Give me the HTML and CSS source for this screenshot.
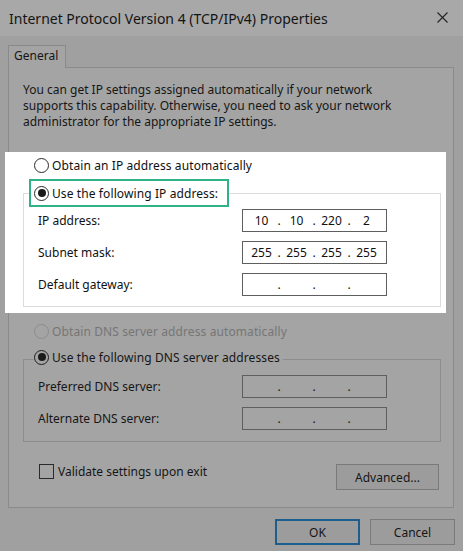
FILE: index.html
```html
<!DOCTYPE html>
<html lang="en">
<head>
<meta charset="utf-8">
<title>Internet Protocol Version 4 (TCP/IPv4) Properties</title>
<link rel="stylesheet" href="styles.css">
</head>
<body>
<div class="window">
  <div class="titlebar">
    <span class="title">Internet Protocol Version 4 (TCP/IPv4) Properties</span>
    <span class="close"><svg width="11" height="11" viewBox="0 0 11 11"><path d="M0.5 0.5 L10.5 10.5 M10.5 0.5 L0.5 10.5" stroke="#222" stroke-width="1.1" fill="none"/></svg></span>
  </div>
  <div class="main">
    <div class="tabs"><div class="tab">General</div></div>
    <div class="panel">
      <p class="desc">You can get IP settings assigned automatically if your network<br>supports this capability. Otherwise, you need to ask your network<br>administrator for the appropriate IP settings.</p>

      <div class="highlight">
        <div class="radio-row first"><span class="radio"></span><span>Obtain an IP address automatically</span></div>
        <div class="radio-row focus"><span class="radio checked"></span><span>Use the following IP address:</span></div>
        <div class="group group-ip">
          <span class="label">IP address:</span>
          <div class="ipbox"><span class="seg">10</span><span class="dot">.</span><span class="seg">10</span><span class="dot">.</span><span class="seg">220</span><span class="dot">.</span><span class="seg">2</span></div>
          <span class="label">Subnet mask:</span>
          <div class="ipbox"><span class="seg">255</span><span class="dot">.</span><span class="seg">255</span><span class="dot">.</span><span class="seg">255</span><span class="dot">.</span><span class="seg">255</span></div>
          <span class="label">Default gateway:</span>
          <div class="ipbox"><span class="seg"></span><span class="dot">.</span><span class="seg"></span><span class="dot">.</span><span class="seg"></span><span class="dot">.</span><span class="seg"></span></div>
        </div>
      </div>

      <div class="radio-row disabled dns-auto"><span class="radio"></span><span>Obtain DNS server address automatically</span></div>
      <div class="radio-row dns-manual"><span class="radio checked gray"></span><span>Use the following DNS server addresses</span></div>
      <div class="group group-dns">
        <span class="label">Preferred DNS server:</span>
        <div class="ipbox"><span class="seg"></span><span class="dot">.</span><span class="seg"></span><span class="dot">.</span><span class="seg"></span><span class="dot">.</span><span class="seg"></span></div>
        <span class="label">Alternate DNS server:</span>
        <div class="ipbox"><span class="seg"></span><span class="dot">.</span><span class="seg"></span><span class="dot">.</span><span class="seg"></span><span class="dot">.</span><span class="seg"></span></div>
      </div>

      <div class="bottom-row">
        <label class="check"><span class="box"></span><span>Validate settings upon exit</span></label>
        <button class="btn advanced">Advanced...</button>
      </div>
    </div>
    <div class="footer">
      <button class="btn ok">OK</button>
      <button class="btn cancel">Cancel</button>
    </div>
  </div>
</div>
</body>
</html>
```
FILE: styles.css
```css
* { box-sizing: border-box; }
html, body { margin: 0; padding: 0; }
body {
  width: 463px;
  height: 551px;
  overflow: hidden;
  background: #a0a0a0;
  font-family: "Noto Sans", "Open Sans", sans-serif;
  font-size: 12px;
  color: #161616;
}
.titlebar {
  height: 36px;
  background: #a8a8a8;
  display: flex;
  align-items: center;
  justify-content: space-between;
  padding-left: 9px;
}
.title {
  font-size: 14px;
  color: #141414;
  margin-top: 1px;
}
.close {
  display: flex;
  padding-right: 15px;
  margin-top: -1px;
}
.main {
  padding: 9px 8px 0 8px;
}
.tabs {
  display: flex;
  height: 22px;
}
.tab {
  width: 58px;
  height: 23px;
  border: 1px solid #8a8a8a;
  border-bottom: none;
  background: #a4a4a4;
  padding-left: 5px;
  line-height: 20px;
  position: relative;
  z-index: 2;
}
.panel {
  width: 446px;
  height: 441px;
  border: 1px solid #8a8a8a;
  background: #a4a4a4;
  padding: 14px 12px 0 14px;
}
.desc {
  margin: 0;
  line-height: 16px;
  height: 48px;
  white-space: nowrap;
}
.highlight {
  background: #ffffff;
  margin: 22px -5px 0 -18px;
  padding: 0 5px 6px 18px;
  color: #111;
}
.radio-row {
  display: flex;
  align-items: center;
  gap: 3px;
  letter-spacing: 0.1px;
}
.radio-row.first {
  height: 27px;
  padding-left: 11px;
}
.radio-row.focus {
  width: 200px;
  height: 28px;
  margin-left: 6px;
  padding-left: 3px;
  border: 2px solid #2fb384;
  background: #fff;
  position: relative;
  z-index: 1;
}
.radio {
  width: 15px;
  height: 15px;
  border-radius: 50%;
  border: 1px solid #2a2a2a;
  background: #fff;
  display: inline-flex;
  align-items: center;
  justify-content: center;
  flex: none;
}
.radio.checked::after {
  content: "";
  width: 8px;
  height: 8px;
  border-radius: 50%;
  background: #1a1a1a;
}
.radio.gray { background: #a4a4a4; border-color: #1e1e1e; }
.group {
  display: grid;
  grid-template-columns: 204px 145px;
  row-gap: 9px;
  align-items: center;
  padding: 15px 0 10px 14px;
}
.group-ip {
  border: 1px solid #dcdcdc;
  margin-top: -14px;
}
.group-dns {
  border: 1px solid #8c8c8c;
  margin-top: -11px;
  padding-bottom: 11px;
}
.label { line-height: 16px; }
.ipbox {
  height: 23px;
  border: 1px solid #5e5e5e;
  display: flex;
  align-items: center;
  padding-left: 4px;
}
.group-ip .ipbox { background: #fff; }
.seg {
  width: 29px;
  text-align: center;
}
.dot {
  width: 6px;
  text-align: center;
}
.dns-auto {
  margin-top: 5px;
  height: 26px;
  padding-left: 11px;
  color: #767676;
}
.dns-auto .radio {
  border-color: #8c8c8c;
  background: transparent;
}
.dns-manual {
  height: 26px;
  width: fit-content;
  margin-left: 10px;
  padding: 0 3px 0 1px;
  background: #a4a4a4;
  position: relative;
  z-index: 1;
}
.bottom-row {
  margin-top: 22px;
  display: flex;
  justify-content: space-between;
  align-items: flex-start;
  padding-left: 16px;
  padding-right: 2px;
}
.check {
  display: flex;
  align-items: center;
  gap: 4px;
  height: 15px;
}
.box {
  width: 15px;
  height: 15px;
  border: 1px solid #2a2a2a;
  flex: none;
}
.btn {
  font-family: inherit;
  font-size: 12px;
  color: #161616;
  background: #9c9c9c;
  border: 1px solid #7a7a7a;
  height: 26px;
  padding: 0;
  margin: 0;
}
.advanced { width: 103px; }
.footer {
  margin-top: 11px;
  display: flex;
  justify-content: flex-end;
  gap: 10px;
}
.ok {
  width: 85px;
  border: 2px solid #1c5e8e;
}
.cancel { width: 85px; }
```
